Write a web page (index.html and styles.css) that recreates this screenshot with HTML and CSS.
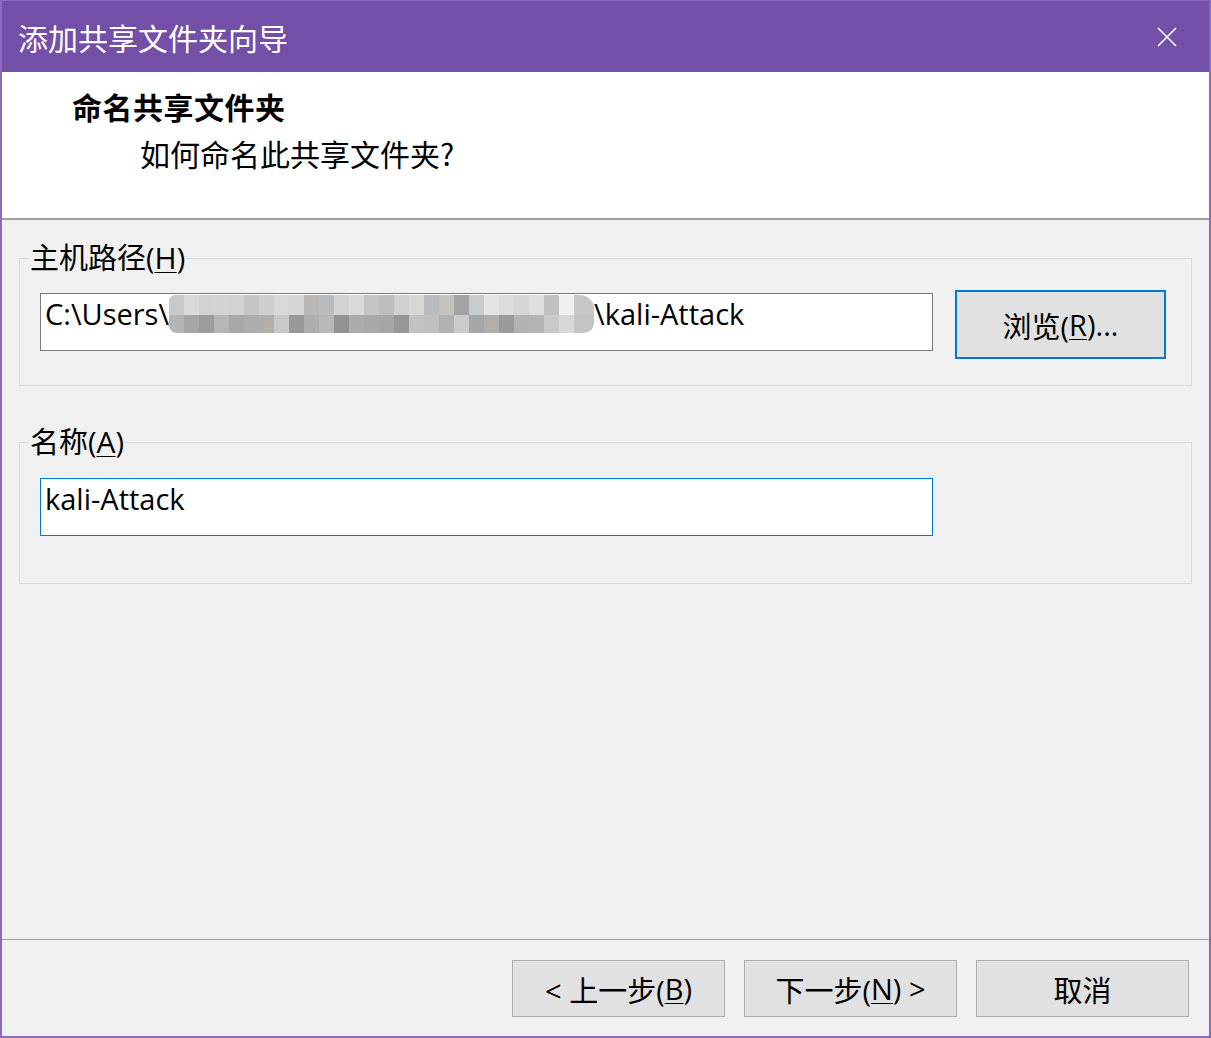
FILE: index.html
```html
<!DOCTYPE html>
<html lang="zh-CN">
<head>
<meta charset="utf-8">
<title>添加共享文件夹向导</title>
<link rel="stylesheet" href="styles.css">
</head>
<body>
<div class="window">
  <div class="titlebar">
    <span class="title">添加共享文件夹向导</span>
    <svg class="close" width="20" height="20" viewBox="0 0 20 20"><path d="M1 1L19 19M19 1L1 19" stroke="#fff" stroke-width="1.6" fill="none"/></svg>
  </div>
  <div class="main">
    <div class="header">
      <div class="h-title">命名共享文件夹</div>
      <div class="h-sub">如何命名此共享文件夹?</div>
    </div>
    <div class="content">
      <fieldset class="group g1">
        <legend>主机路径(<u>H</u>)</legend>
        <div class="row r1">
          <div class="field">C:\Users\<span class="mosaic"></span>\kali-Attack</div>
          <div class="btn browse">浏览(<u>R</u>)...</div>
        </div>
      </fieldset>
      <fieldset class="group g2">
        <legend>名称(<u>A</u>)</legend>
        <div class="row r2">
          <div class="field focus">kali-Attack</div>
        </div>
      </fieldset>
    </div>
    <div class="footer">
      <div class="btn nav">&lt; 上一步(<u>B</u>)</div>
      <div class="btn nav">下一步(<u>N</u>) &gt;</div>
      <div class="btn nav">取消</div>
    </div>
  </div>
</div>
</body>
</html>
```
FILE: styles.css
```css
* { box-sizing: border-box; }
html, body { margin: 0; padding: 0; }
body {
  width: 1211px;
  height: 1038px;
  overflow: hidden;
  font-family: "Open Sans", "Noto Sans CJK SC", sans-serif;
  color: #000;
  background: #f0f0f0;
}
.window {
  width: 1211px;
  height: 1038px;
  display: flex;
  flex-direction: column;
}
.titlebar {
  height: 72px;
  flex: none;
  background: #744fa8;
  border-top: 1px solid #8a69bc;
  border-left: 2px solid #8a6bbd;
  border-right: 2px solid #8a6bbd;
  display: flex;
  align-items: center;
  justify-content: space-between;
  padding: 0 32px 0 16px;
  color: #fff;
}
.title {
  font-family: "Noto Sans CJK SC", sans-serif;
  font-size: 30px;
  line-height: 40px;
}
.close { display: block; }
.main {
  flex: 1;
  display: flex;
  flex-direction: column;
  border: 2px solid #8a6bbd;
  border-top: none;
  background: #f0f0f0;
}
.header {
  height: 148px;
  flex: none;
  background: #fff;
  border-bottom: 2px solid #a0a0a0;
  padding: 14px 0 0 70px;
  font-family: "Noto Sans CJK SC", sans-serif;
}
.h-title {
  font-size: 30px;
  line-height: 40px;
  font-weight: 700;
  letter-spacing: 0.5px;
}
.h-sub {
  font-size: 30px;
  line-height: 40px;
  margin: 7px 0 0 68px;
}
.content {
  padding: 20px 17px 0 17px;
}
.group {
  margin: 0;
  padding: 0;
  border: 1px solid #dcdcdc;
  min-width: 0;
}
.group legend {
  margin-left: 9px;
  padding: 0 1px;
  font-size: 29px;
  line-height: 36px;
}
.group legend u { font-size: 30px; }
.row {
  display: flex;
  align-items: flex-start;
  padding-left: 20px;
}
.r1 { padding-top: 14px; padding-bottom: 26px; }
.r2 { padding-top: 18px; padding-bottom: 47px; }
.g2 { margin-top: 38px; }
.field {
  width: 893px;
  height: 58px;
  border: 1px solid #7a7a7a;
  background: #fff;
  padding: 0 0 0 4px;
  font-size: 29px;
  line-height: 40px;
  white-space: nowrap;
  overflow: hidden;
}
.r1 .field { margin-top: 3px; }
.field.focus { border-color: #0078d7; }
.mosaic {
  display: inline-block;
  width: 425px;
  height: 38px;
  vertical-align: top;
  margin-top: 1px;
  background-image:
    linear-gradient(to right, #c8c8c8 0 15px, #d8d9db 15px 30px, #d3d2d0 30px 45px, #d3d3d3 45px 60px, #d2d2d2 60px 75px, #c5c5c5 75px 90px, #cfcfcf 90px 105px, #d9d9d9 105px 120px, #d6d6d6 120px 135px, #b9b6b4 135px 150px, #b8bcbf 150px 165px, #d3d3d3 165px 180px, #d9d9d9 180px 195px, #c4c4c4 195px 210px, #bdbdbd 210px 225px, #d0d0d0 225px 240px, #d7d7d7 240px 255px, #babcc1 255px 270px, #c5c1bc 270px 285px, #a3a3a3 285px 300px, #c9cbcd 300px 315px, #e4e4e4 315px 330px, #dcdcdc 330px 345px, #d6d6d6 345px 360px, #dedede 360px 375px, #c0c0c0 375px 390px, #efefef 390px 405px, #c6c6c6 405px 425px),
    linear-gradient(to right, #b5b5b5 0 15px, #a6a6a6 15px 30px, #9c9c9c 30px 45px, #b6b6b6 45px 60px, #a8a8a8 60px 75px, #adadad 75px 90px, #b1aeab 90px 105px, #c9c9c9 105px 120px, #97989b 120px 135px, #b0adaa 135px 150px, #b5b9bc 150px 165px, #929292 165px 180px, #ababab 180px 195px, #a9a9a9 195px 210px, #a6a6a6 210px 225px, #979797 225px 240px, #c1c3c3 240px 255px, #c2bebb 255px 270px, #b2b2b2 270px 285px, #cbcbcb 285px 300px, #a5a8ab 300px 315px, #b2aeac 315px 330px, #9a9a9a 330px 345px, #b2b2b2 345px 360px, #b5b5b5 360px 375px, #c9c9c9 375px 390px, #d7d7d7 390px 405px, #c4c4c4 405px 425px);
  background-size: 100% 20px, 100% 18px;
  background-position: 0 0, 0 20px;
  background-repeat: no-repeat;
  border-radius: 6px 14px 10px 8px;
}
.btn {
  background: #e1e1e1;
  border: 1px solid #adadad;
  display: flex;
  align-items: center;
  justify-content: center;
  font-size: 29px;
  white-space: nowrap;
}
.browse {
  width: 211px;
  height: 69px;
  margin-left: 22px;
  border: 2px solid #0078d7;
}
.footer {
  margin-top: auto;
  height: 97px;
  flex: none;
  border-top: 1px solid #a0a0a0;
  display: flex;
  justify-content: flex-end;
  align-items: flex-start;
  gap: 19px;
  padding: 20px 20px 0 0;
}
.nav {
  width: 213px;
  height: 57px;
}
u { text-decoration-thickness: 1px; text-underline-offset: 3px; }
```
